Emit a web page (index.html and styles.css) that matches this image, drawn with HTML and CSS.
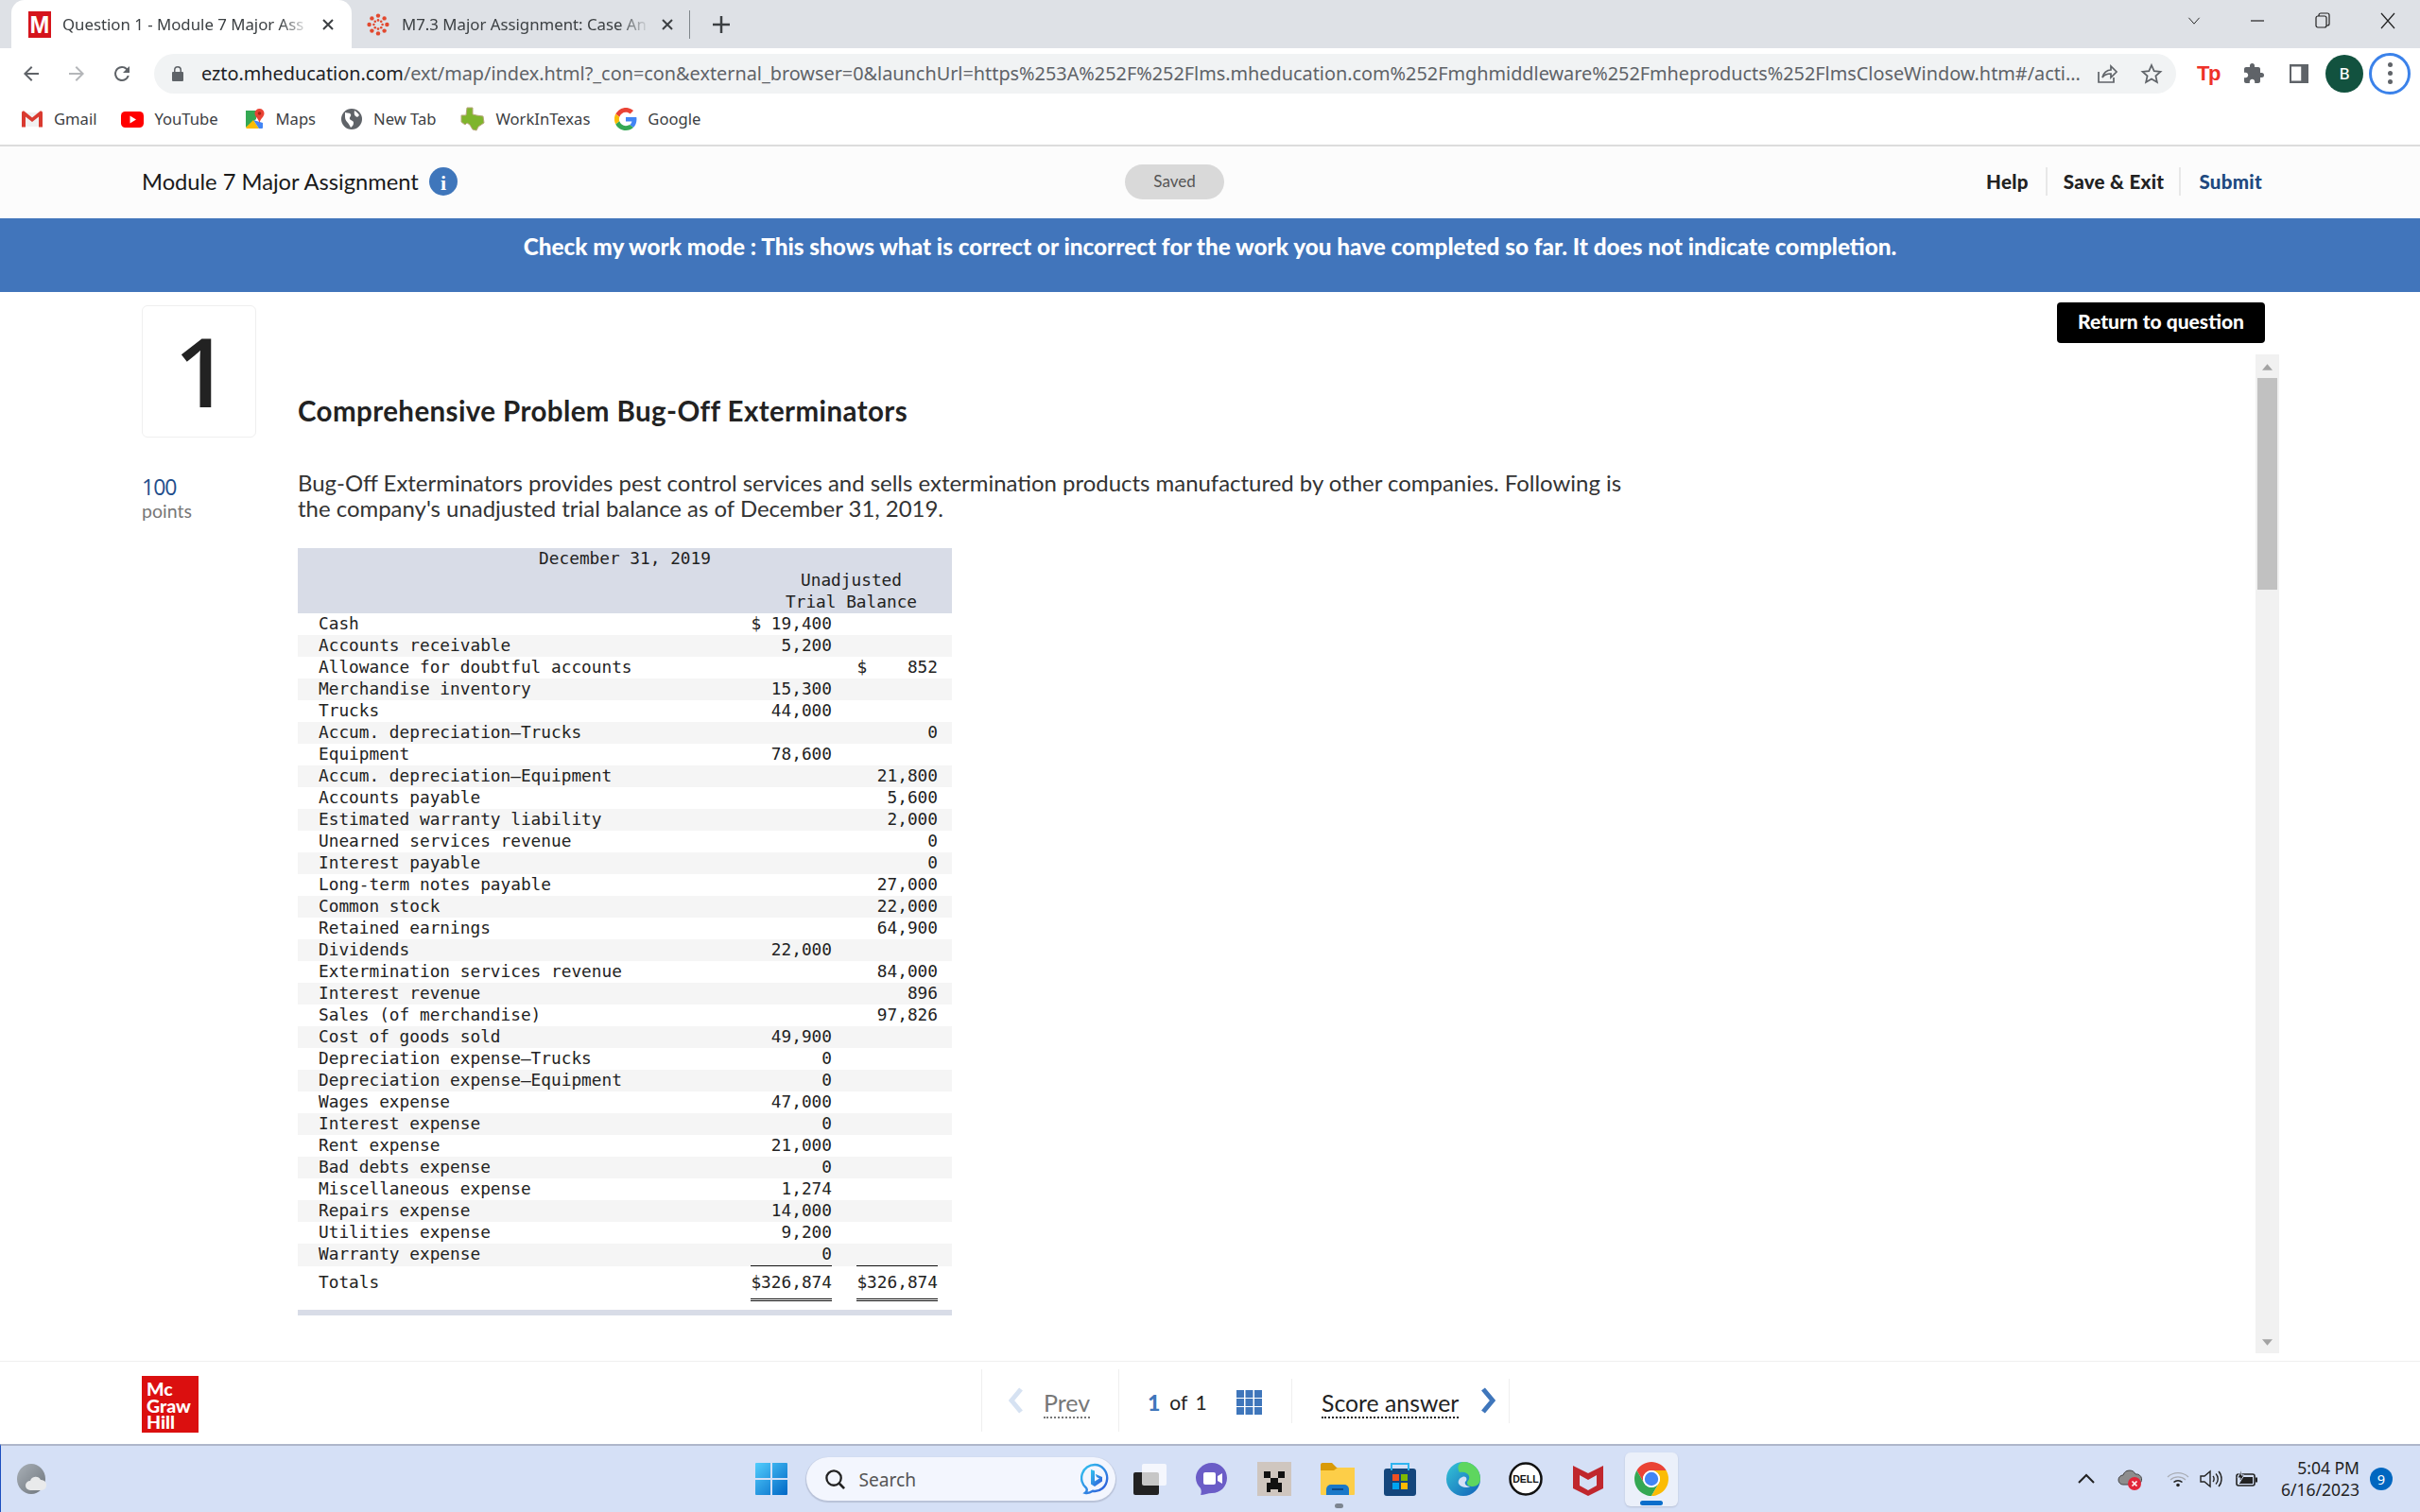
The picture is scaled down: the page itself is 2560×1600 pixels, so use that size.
FILE: index.html
```html
<!DOCTYPE html>
<html lang="en">
<head>
<meta charset="utf-8">
<title>Question 1 - Module 7 Major Assignment</title>
<link rel="stylesheet" href="styles.css">
</head>
<body>
<div class="tabstrip">
  <div class="tab tab-active">
    <span class="fav-m">M</span>
    <span class="tab-title">Question 1 - Module 7 Major Ass</span>
    <svg class="tab-x" viewBox="0 0 14 14"><path d="M2 2l10 10M12 2L2 12"/></svg>
  </div>
  <div class="tab tab-idle">
    <svg class="fav" viewBox="0 0 24 24"><g fill="#e2492f"><circle cx="12" cy="2.6" r="2.2"/><circle cx="12" cy="21.4" r="2.2"/><circle cx="2.6" cy="12" r="2.2"/><circle cx="21.4" cy="12" r="2.2"/><circle cx="5.4" cy="5.4" r="2.2"/><circle cx="18.6" cy="5.4" r="2.2"/><circle cx="5.4" cy="18.6" r="2.2"/><circle cx="18.6" cy="18.6" r="2.2"/><circle cx="12" cy="7.4" r="1.3"/><circle cx="12" cy="16.6" r="1.3"/><circle cx="7.4" cy="12" r="1.3"/><circle cx="16.6" cy="12" r="1.3"/><circle cx="8.8" cy="8.8" r="1.3"/><circle cx="15.2" cy="8.8" r="1.3"/><circle cx="8.8" cy="15.2" r="1.3"/><circle cx="15.2" cy="15.2" r="1.3"/></g></svg>
    <span class="tab-title">M7.3 Major Assignment: Case An</span>
    <svg class="tab-x" viewBox="0 0 14 14"><path d="M2 2l10 10M12 2L2 12"/></svg>
  </div>
  <span class="tab-sep"></span>
  <svg class="tab-plus" viewBox="0 0 20 20"><path d="M10 1v18M1 10h18"/></svg>
  <div class="win-controls">
    <svg class="win-btn win-chev" viewBox="0 0 20 20"><path d="M3 6l7 8 7-8"/></svg>
    <svg class="win-btn" viewBox="0 0 20 20"><path d="M3 10h14"/></svg>
    <svg class="win-btn" viewBox="0 0 20 20"><rect x="3" y="5" width="11" height="12" rx="2"/><path d="M6 5V4a2 2 0 0 1 2-2h7a2 2 0 0 1 2 2v9a2 2 0 0 1-2 2h-1"/></svg>
    <svg class="win-btn" viewBox="0 0 20 20"><path d="M3 2l14 16M17 2L3 18"/></svg>
  </div>
</div>

<div class="toolbar">
  <span class="tool"><svg class="ic" viewBox="0 0 24 24"><path d="M20 11H7.8l5.6-5.6L12 4l-8 8 8 8 1.4-1.4L7.8 13H20z"/></svg></span>
  <span class="tool"><svg class="ic ic-off" viewBox="0 0 24 24"><path d="M4 11h12.2l-5.6-5.6L12 4l8 8-8 8-1.4-1.4 5.6-5.6H4z"/></svg></span>
  <span class="tool"><svg class="ic" viewBox="0 0 24 24"><path d="M17.65 6.35A7.96 7.96 0 0 0 12 4a8 8 0 1 0 7.73 10h-2.08A6 6 0 1 1 12 6c1.66 0 3.14.69 4.22 1.78L13 11h7V4z"/></svg></span>
  <div class="omnibox">
    <svg class="lock" viewBox="0 0 14 18"><path d="M2 7h1V5a4 4 0 0 1 8 0v2h1a1 1 0 0 1 1 1v8a1 1 0 0 1-1 1H2a1 1 0 0 1-1-1V8a1 1 0 0 1 1-1zm2.5 0h5V5a2.5 2.5 0 0 0-5 0z"/></svg>
    <span class="url"><b>ezto.mheducation.com</b>/ext/map/index.html?_con=con&amp;external_browser=0&amp;launchUrl=https%253A%252F%252Flms.mheducation.com%252Fmghmiddleware%252Fmheproducts%252FlmsCloseWindow.htm#/acti...</span>
    <svg class="omni-ic" viewBox="0 0 24 24"><path d="M3 10v11h16v-5M7 16c1-5 5-8 9-8V4l6 6-6 6v-4c-4 0-7 1-9 4z"/></svg>
    <svg class="omni-ic" viewBox="0 0 24 24"><path d="M12 3l2.7 6.2 6.8.6-5.1 4.5 1.5 6.7L12 17.5 6.100 21l1.500-6.700L2.500 9.800l6.800-.6z"/></svg>
  </div>
  <div class="ext-row">
    <span class="tool"><span class="tp">Tp</span></span>
    <span class="tool"><svg class="ic" viewBox="0 0 24 24"><path d="M20.500 11H19V7c0-1.100-.9-2-2-2h-4V3.500a2.500 2.500 0 0 0-5 0V5H4c-1.100 0-2 .9-2 2v3.800h1.500c1.500 0 2.700 1.200 2.700 2.700S5 16.200 3.500 16.200H2V20c0 1.100.9 2 2 2h3.800v-1.500c0-1.500 1.200-2.700 2.700-2.700s2.700 1.200 2.700 2.700V22H17c1.100 0 2-.9 2-2v-4h1.500a2.500 2.500 0 0 0 0-5z"/></svg></span>
    <span class="tool"><svg class="ic" viewBox="0 0 24 24"><path fill-rule="evenodd" d="M2 2h20v20H2zM4 4.500v15h10.500v-15z"/><path d="M14.500 4h6v16h-6z"/></svg></span>
    <span class="tool"><span class="avatar">B</span></span>
    <span class="tool"><span class="menu-ring"><i></i><i></i><i></i></span></span>
  </div>
</div>

<div class="bookmarks">
  <span class="bm"><svg class="bm-ic" viewBox="0 0 24 24"><path fill="#f1f1f1" d="M3 5h18v15H3z"/><path fill="#d93a30" d="M1 5.500C1 3.500 3 3 4 4l8 6.500L20 4c1-1 3-.5 3 1.500V20.500h-4V9.500l-7 5.500-7-5.500v11H1z"/></svg>Gmail</span>
  <span class="bm"><svg class="bm-ic" viewBox="0 0 24 24"><rect y="4" width="24" height="17" rx="4.500" fill="#f00"/><path fill="#fff" d="M9.500 8.500l6.500 4-6.500 4z"/></svg>YouTube</span>
  <span class="bm"><svg class="bm-ic" viewBox="0 0 24 24"><path fill="#34a853" d="M3 3h11v9L3 21z"/><path fill="#fbbc04" d="M3 21l8-8 6 9H4z"/><path fill="#4285f4" d="M11 13l6 9h3a1 1 0 0 0 1-1v-5z"/><path fill="#ea4335" d="M17.500 1a5 5 0 0 1 5 5c0 3.500-3.700 5-5 10-1.300-5-5-6.500-5-10a5 5 0 0 1 5-5z"/><circle cx="17.500" cy="6" r="1.800" fill="#a52714"/></svg>Maps</span>
  <span class="bm"><svg class="bm-ic" viewBox="0 0 24 24"><circle cx="12" cy="12" r="11" fill="#5f6368"/><path fill="#fff" d="M5 5c3 1 5 0 6 2s-2 3-1 5 4 1 4 4-2 4-3 5c-1-2-2-4-3-5s-3-3-3-6zM15 3c2 1 4 3 5 5l-2 2c-2-1-4-2-3-7z"/></svg>New Tab</span>
  <span class="bm"><svg class="bm-tx" viewBox="0 0 26 26"><path fill="#7fb52c" stroke="#b7a77a" d="M7 1h6v7l4 1 7 1 1 7-6 4-2 4-4-1-3-5-3-2-2 2-4-3V9h5z"/></svg>WorkInTexas</span>
  <span class="bm"><svg class="bm-ic" viewBox="0 0 48 48"><path fill="#ea4335" d="M24 9.500c3.500 0 6.700 1.300 9.200 3.400l6.900-6.900A24 24 0 0 0 2.600 13.200l8 6.200C12.500 13.600 17.800 9.500 24 9.500z"/><path fill="#4285f4" d="M46.900 24.500c0-1.600-.2-3.100-.4-4.500H24v9h12.900c-.6 3-2.200 5.500-4.700 7.200l7.700 6C44.400 37.900 46.900 31.800 46.900 24.500z"/><path fill="#fbbc05" d="M10.500 28.600a14.500 14.500 0 0 1 0-9.200l-8-6.200a24 24 0 0 0 0 21.600z"/><path fill="#34a853" d="M24 48c6.500 0 11.900-2.100 15.900-5.800l-7.700-6c-2.200 1.500-5 2.300-8.200 2.300-6.200 0-11.500-4.200-13.400-9.800l-8 6.200C6.500 42.600 14.600 48 24 48z"/></svg>Google</span>
</div>

<header class="app-head">
  <div class="head-title">
    <span>Module 7 Major Assignment</span>
    <svg class="info" viewBox="0 0 30 30"><circle cx="15" cy="15" r="15" fill="#3f76bb"/><text x="15" y="24" text-anchor="middle" class="info-i">i</text></svg>
  </div>
  <span class="saved">Saved</span>
  <nav class="head-nav">
    <a class="nav-help">Help</a>
    <a class="nav-save">Save &amp; Exit</a>
    <a class="nav-submit">Submit</a>
  </nav>
</header>

<div class="banner">Check my work mode : This shows what is correct or incorrect for the work you have completed so far. It does not indicate completion.</div>

<main class="content">
  <section class="question">
    <div class="q-side">
      <div class="q-number">1</div>
      <div class="q-points"><span class="pts">100</span><span class="pts-label">points</span></div>
    </div>
    <div class="q-body">
      <h1 class="q-title">Comprehensive Problem Bug-Off Exterminators</h1>
      <p class="q-text">Bug-Off Exterminators provides pest control services and sells extermination products manufactured by other companies. Following is the company's unadjusted trial balance as of December 31, 2019.</p>
      <table class="tb">
        <colgroup><col class="c-name"><col class="c-num"><col class="c-gap"><col class="c-num"><col class="c-end"></colgroup>
        <thead>
          <tr><th colspan="5" class="th-date">December 31, 2019</th></tr>
          <tr><th></th><th colspan="4">Unadjusted</th></tr>
          <tr><th></th><th colspan="4">Trial Balance</th></tr>
        </thead>
        <tbody>
          <tr><td>Cash</td><td>$ 19,400</td><td></td><td></td><td></td></tr>
          <tr><td>Accounts receivable</td><td>5,200</td><td></td><td></td><td></td></tr>
          <tr><td>Allowance for doubtful accounts</td><td></td><td></td><td>$    852</td><td></td></tr>
          <tr><td>Merchandise inventory</td><td>15,300</td><td></td><td></td><td></td></tr>
          <tr><td>Trucks</td><td>44,000</td><td></td><td></td><td></td></tr>
          <tr><td>Accum. depreciation—Trucks</td><td></td><td></td><td>0</td><td></td></tr>
          <tr><td>Equipment</td><td>78,600</td><td></td><td></td><td></td></tr>
          <tr><td>Accum. depreciation—Equipment</td><td></td><td></td><td>21,800</td><td></td></tr>
          <tr><td>Accounts payable</td><td></td><td></td><td>5,600</td><td></td></tr>
          <tr><td>Estimated warranty liability</td><td></td><td></td><td>2,000</td><td></td></tr>
          <tr><td>Unearned services revenue</td><td></td><td></td><td>0</td><td></td></tr>
          <tr><td>Interest payable</td><td></td><td></td><td>0</td><td></td></tr>
          <tr><td>Long-term notes payable</td><td></td><td></td><td>27,000</td><td></td></tr>
          <tr><td>Common stock</td><td></td><td></td><td>22,000</td><td></td></tr>
          <tr><td>Retained earnings</td><td></td><td></td><td>64,900</td><td></td></tr>
          <tr><td>Dividends</td><td>22,000</td><td></td><td></td><td></td></tr>
          <tr><td>Extermination services revenue</td><td></td><td></td><td>84,000</td><td></td></tr>
          <tr><td>Interest revenue</td><td></td><td></td><td>896</td><td></td></tr>
          <tr><td>Sales (of merchandise)</td><td></td><td></td><td>97,826</td><td></td></tr>
          <tr><td>Cost of goods sold</td><td>49,900</td><td></td><td></td><td></td></tr>
          <tr><td>Depreciation expense—Trucks</td><td>0</td><td></td><td></td><td></td></tr>
          <tr><td>Depreciation expense—Equipment</td><td>0</td><td></td><td></td><td></td></tr>
          <tr><td>Wages expense</td><td>47,000</td><td></td><td></td><td></td></tr>
          <tr><td>Interest expense</td><td>0</td><td></td><td></td><td></td></tr>
          <tr><td>Rent expense</td><td>21,000</td><td></td><td></td><td></td></tr>
          <tr><td>Bad debts expense</td><td>0</td><td></td><td></td><td></td></tr>
          <tr><td>Miscellaneous expense</td><td>1,274</td><td></td><td></td><td></td></tr>
          <tr><td>Repairs expense</td><td>14,000</td><td></td><td></td><td></td></tr>
          <tr><td>Utilities expense</td><td>9,200</td><td></td><td></td><td></td></tr>
          <tr class="row-last"><td>Warranty expense</td><td>0</td><td></td><td></td><td></td></tr>
          <tr class="row-total"><td>Totals</td><td>$326,874</td><td></td><td>$326,874</td><td></td></tr>
        </tbody>
      </table>
      <div class="tb-foot"></div>
    </div>
  </section>
  <aside class="q-right">
    <a class="return-btn">Return to question</a>
    <div class="scrollbar">
      <svg class="sb-arrow" viewBox="0 0 10 6"><path d="M5 0l5 6H0z"/></svg>
      <div class="sb-thumb"></div>
      <svg class="sb-arrow sb-down" viewBox="0 0 10 6"><path d="M5 6L0 0h10z"/></svg>
    </div>
  </aside>
</main>

<footer class="app-foot">
  <div class="mh-logo">Mc<br>Graw<br>Hill</div>
  <div class="pager">
    <div class="pg-prev">
      <svg class="chev" viewBox="0 0 16 28"><path class="chev-off" d="M13 2L3 14l10 12"/></svg>
      <a class="prev-link">Prev</a>
    </div>
    <div class="pg-count">
      <b>1</b><span class="of">of</span><span>1</span>
      <svg class="grid-ic" viewBox="0 0 27 26"><g fill="#3f76bb"><rect width="8" height="8"/><rect x="9.500" width="8" height="8"/><rect x="19" width="8" height="8"/><rect y="9" width="8" height="8"/><rect x="9.500" y="9" width="8" height="8"/><rect x="19" y="9" width="8" height="8"/><rect y="18" width="8" height="8"/><rect x="9.500" y="18" width="8" height="8"/><rect x="19" y="18" width="8" height="8"/></g></svg>
    </div>
    <div class="pg-score">
      <a class="score-link">Score answer</a>
      <svg class="chev" viewBox="0 0 16 28"><path class="chev-on" d="M3 2l10 12L3 26"/></svg>
    </div>
  </div>
</footer>

<div class="taskbar">
  <svg class="weather" viewBox="0 0 32 32"><defs><linearGradient id="wg" x1="0" y1="0" x2="1" y2="1"><stop offset="0" stop-color="#a9b0b7"/><stop offset="1" stop-color="#6e757c"/></linearGradient></defs><ellipse cx="15" cy="16" rx="15" ry="16" fill="url(#wg)"/><path fill="#e9eaeb" d="M14 28a5 5 0 0 1 0-10 6 6 0 0 1 11-1 5.500 5.500 0 0 1 6 6 5 5 0 0 1-5 5z"/></svg>
  <div class="task-center">
    <span class="slot"><svg class="task-ic" viewBox="0 0 36 36"><defs><linearGradient id="st" x1="0" y1="0" x2="1" y2="1"><stop offset="0" stop-color="#52cdfd"/><stop offset="1" stop-color="#0067c5"/></linearGradient></defs><path fill="url(#st)" d="M1 2a1 1 0 0 1 1-1h15v16H1zM19 1h15a1 1 0 0 1 1 1v15H19zM1 19h16v16H2a1 1 0 0 1-1-1zM19 19h16v15a1 1 0 0 1-1 1H19z"/></svg></span>
    <div class="search">
      <svg class="search-ic" viewBox="0 0 24 24"><circle cx="10.500" cy="10.500" r="8" fill="none" stroke="#222" stroke-width="2.400"/><path d="M16.500 16.500l5.500 5.500" stroke="#222" stroke-width="2.800"/></svg>
      <span>Search</span>
      <svg class="bing" viewBox="0 0 30 34"><defs><linearGradient id="bg" x1="0" y1="0" x2="1" y2="1"><stop offset="0" stop-color="#32c5f0"/><stop offset="1" stop-color="#2e55d8"/></linearGradient></defs><path fill="none" stroke="url(#bg)" stroke-width="2.400" d="M15 2a13 14 0 1 1-2 27.800c-3 2-6 2.500-8 2 2-1.500 2-3.500 1.200-5A14 14 0 0 1 15 2z"/><path fill="url(#bg)" d="M11 7l4 1.500v11l5-3-3-1.500-1.300-3.300L23 15v4.500L15 25l-4-2.500z"/></svg>
    </div>
    <span class="slot"><svg class="task-ic" viewBox="0 0 36 36"><rect x="1" y="11" width="27" height="24" rx="2" fill="#222"/><rect x="10" y="2" width="26" height="23" rx="2" fill="#fff" opacity=".75"/></svg></span>
    <span class="slot"><svg class="task-ic" viewBox="0 0 36 36"><path fill="#6b5dc7" d="M18 1c9 0 16 7 16 16s-7 16-16 16c-4 0-8 2-12 2 1-2 1-5 0-7-3-3-5-7-5-11C1 8 9 1 18 1z"/><rect x="9" y="11" width="13" height="13" rx="2" fill="#fff"/><path fill="#fff" d="M24 15l5-3v11l-5-3z"/></svg></span>
    <span class="slot"><svg class="task-ic" viewBox="0 0 36 36"><rect width="36" height="36" fill="#cfc6bf"/><path fill="#111" d="M7 10h7v7H7zM22 10h7v7h-7zM14 17h8v5h4v10h-4v-3h-8v3h-4V22h4z"/></svg></span>
    <span class="slot"><svg class="task-ic" viewBox="0 0 36 36"><path fill="#d99a07" d="M0 3a2 2 0 0 1 2-2h10l5 5h19v6H0z"/><path fill="#fdce48" d="M0 9h14l4-3h18v28a1 1 0 0 1-1 1H1a1 1 0 0 1-1-1z"/><path fill="#1a78c8" d="M6 35v-6a5 5 0 0 1 5-5h14a5 5 0 0 1 5 5v6z"/><rect x="12" y="28" width="12" height="2" fill="#0c4a8a"/></svg><i class="run-dot"></i></span>
    <span class="slot"><svg class="task-ic" viewBox="0 0 36 36"><rect x="1" y="7" width="34" height="29" rx="3" fill="#14467c"/><path d="M9 9V2h18v7" fill="none" stroke="#2fb4ef" stroke-width="2"/><rect x="10" y="13" width="7" height="7" fill="#f25022"/><rect x="19" y="13" width="7" height="7" fill="#7fba00"/><rect x="10" y="22" width="7" height="7" fill="#00a4ef"/><rect x="19" y="22" width="7" height="7" fill="#ffb900"/></svg></span>
    <span class="slot"><svg class="task-ic" viewBox="0 0 36 36"><defs><linearGradient id="ed" x1="0" y1="0" x2="1" y2="1"><stop offset="0" stop-color="#36c6d8"/><stop offset="1" stop-color="#1160b8"/></linearGradient></defs><circle cx="18" cy="18" r="18" fill="url(#ed)"/><path fill="#5ed65f" d="M18 0a18 18 0 0 1 18 18c0 5-4 8-8 8-3 0-6-1-6-4 0-2 3-3 2-7-1-3-5-5-10-4C10 5 14 0 18 0z"/><path fill="#d5e0f6" d="M17 16c4-2 6 3 3 5-1 2 1 5 5 5-3 2-10 1-12-3-1-3 1-6 4-7z"/></svg></span>
    <span class="slot"><svg class="task-ic" viewBox="0 0 36 36"><circle cx="18" cy="18" r="16.500" fill="#fff" stroke="#111" stroke-width="2.500"/><text x="18" y="22" text-anchor="middle" class="dell-t">DELL</text></svg></span>
    <span class="slot"><svg class="task-ic" viewBox="0 0 36 36"><path fill="#c0272d" d="M2 4l16 8 16-8v24l-16 8-16-8zM9 14v11l9 5 9-5V14l-9 5z"/></svg></span>
    <span class="slot slot-active"><svg class="task-ic" viewBox="4 4 40 40"><path fill="#ea4335" d="M41.300 14A20 20 0 0 0 6.700 14L15.340 29A10 10 0 0 1 24 14z"/><path fill="#34a853" d="M6.700 14A20 20 0 0 0 24 44L32.660 29A10 10 0 0 1 15.340 29z"/><path fill="#fbbc04" d="M24 44A20 20 0 0 0 41.300 14L24 14A10 10 0 0 1 32.660 29z"/><circle cx="24" cy="24" r="10" fill="#fff"/><circle cx="24" cy="24" r="8" fill="#4285f4"/></svg><i class="run-bar"></i></span>
  </div>
  <div class="tray">
    <svg class="tray-chev" viewBox="0 0 18 12"><path d="M1 10l8-8 8 8"/></svg>
    <svg class="tray-cloud" viewBox="0 0 26 24"><path fill="#8d8d8d" stroke="#444" d="M6 18a5 5 0 0 1 0-10 7 7 0 0 1 13-1 5 5 0 0 1 2 11z"/><circle cx="18" cy="17" r="7" fill="#e2263a"/><path d="M15.500 14.500l5 5M20.500 14.500l-5 5" stroke="#fff" stroke-width="1.600"/></svg>
    <svg class="tray-wifi" viewBox="0 0 24 18"><path d="M1 7a16 16 0 0 1 22 0" stroke="#a9adb5"/><path d="M4 10a12 12 0 0 1 16 0" stroke="#a9adb5"/><path d="M7.500 12.500a7 7 0 0 1 9 0" stroke="#222" stroke-width="1.600"/><circle cx="12" cy="15.500" r="1.800" fill="#222" stroke="none"/></svg>
    <svg class="tray-vol" viewBox="0 0 24 20"><path d="M1 7v6h4l6 5V2L5 7z"/><path d="M14 7c1.500 1.500 1.500 4.500 0 6M17 4.500c3 3 3 8 0 11M20 2c4 4.500 4 11.500 0 16"/></svg>
    <svg class="tray-bat" viewBox="0 0 24 20"><rect x="1" y="5" width="19" height="12" rx="2" fill="none" stroke="#222" stroke-width="1.600"/><rect x="4" y="8" width="14" height="7" fill="#222"/><rect x="21" y="8.500" width="2" height="5" fill="#222"/><path fill="#222" stroke="#d5e0f6" stroke-width="1" d="M6 0L2 9h3l-1 5 5-8H6z"/></svg>
    <div class="clock"><span>5:04 PM</span><span>6/16/2023</span></div>
    <span class="notif">9</span>
  </div>
</div>
</body>
</html>
```
FILE: styles.css
```css
* { box-sizing: border-box; }
html, body { margin: 0; padding: 0; }
body {
  width: 2560px; height: 1600px; overflow: hidden;
  display: flex; flex-direction: column;
  font-family: "Lato", "Liberation Sans", sans-serif;
  color: #222; background: #fff;
}
a { cursor: pointer; }

/* Browser tabs */
.tabstrip { height: 51px; background: #dee1e6; display: flex; align-items: center; padding-left: 12px; flex: none; }
.tab { height: 51px; display: flex; align-items: center; font: 16.800px "Noto Sans", sans-serif; color: #3c4043; }
.tab-active { width: 360px; background: #fff; border-radius: 14px 14px 0 0; padding-left: 18px; }
.tab-idle { width: 347px; padding-left: 16px; }
.fav-m { width: 24px; height: 28px; background: #d5141c; color: #fff; font: 700 25px/28px "Liberation Sans", sans-serif; text-align: center; flex: none; }
.fav { width: 24px; height: 24px; flex: none; }
.tab-title {
  width: 262px; margin-left: 12px; white-space: nowrap;
  -webkit-mask-image: linear-gradient(90deg, #000 88%, transparent 100%);
  mask-image: linear-gradient(90deg, #000 88%, transparent 100%);
}
.tab-idle .tab-title { margin-left: 13px; }
.tab-x { width: 14px; height: 14px; margin-left: 12px; flex: none; fill: none; stroke: #3c4043; stroke-width: 2; }
.tab-sep { width: 1px; height: 30px; background: #80868b; margin-left: 10px; }
.tab-plus { width: 20px; height: 20px; margin-left: 23px; fill: none; stroke: #3c4043; stroke-width: 2.500; }
.win-controls { margin-left: auto; display: flex; align-items: center; padding: 0 24px 8px 0; gap: 49px; }
.win-btn { width: 20px; height: 20px; fill: none; stroke: #222; stroke-width: 1.200; }
.win-chev { width: 16px; }

/* Browser toolbar */
.toolbar { height: 51px; display: flex; align-items: center; padding: 2px 0 0 9px; flex: none; background: #fff; }
.tool { width: 48px; height: 44px; display: flex; align-items: center; justify-content: center; flex: none; }
.ic { width: 24px; height: 24px; fill: #5f6368; }
.ic-off { fill: #b4b6b9; }
.omnibox { width: 2139px; height: 42px; margin-left: 10px; border-radius: 21px; background: #f1f3f4; display: flex; align-items: center; padding: 0 15px 0 18px; flex: none; }
.lock { width: 14px; height: 18px; fill: #5f6368; flex: none; }
.url { margin-left: 18px; width: 1984px; flex: none; font: 19.850px/42px "Noto Sans", sans-serif; color: #5f6368; white-space: nowrap; }
.url b { font-weight: 400; color: #202124; }
.omni-ic { width: 24px; height: 24px; fill: none; stroke: #5f6368; stroke-width: 1.700; margin-left: 23px; flex: none; }
.url + .omni-ic { margin-left: 20px; }
.ext-row { display: flex; margin-left: 10px; }
.tp { font: 900 22px/1 "Liberation Sans", sans-serif; color: #ee3229; letter-spacing: -1.500px; }
.avatar { width: 40px; height: 40px; border-radius: 50%; background: #12523f; color: #fff; font: 500 17px/40px "Noto Sans", sans-serif; text-align: center; }
.menu-ring { width: 44px; height: 44px; border: 3px solid #3b82ea; border-radius: 50%; display: flex; flex-direction: column; align-items: center; justify-content: center; gap: 4px; }
.menu-ring i { width: 5px; height: 5px; background: #5f6368; border-radius: 50%; }

/* Bookmarks */
.bookmarks { height: 53px; padding: 0 0 4px 22px; display: flex; align-items: center; gap: 26px; border-bottom: 2px solid #dcdcdc; flex: none; font: 16.600px "Noto Sans", sans-serif; color: #3c4043; }
.bm { display: flex; align-items: center; gap: 11px; }
.bm-ic { width: 24px; height: 24px; flex: none; }
.bm-tx { width: 26px; height: 26px; flex: none; }

/* Assignment header */
.app-head { height: 76px; background: #fcfcfc; display: flex; align-items: center; padding: 0 167px 2px 150px; flex: none; }
.head-title { width: 1040px; display: flex; align-items: center; gap: 11px; font-size: 23.700px; color: #1a1a1a; }
.info { width: 30px; height: 30px; }
.info-i { font: 700 22px "Liberation Serif", serif; fill: #fff; }
.saved { width: 105px; height: 37px; background: #d9d9d9; border-radius: 19px; text-align: center; font-size: 17px; line-height: 35px; color: #555; }
.head-nav { margin-left: auto; display: flex; align-items: center; font-size: 20.500px; font-weight: 900; letter-spacing: .3px; }
.head-nav a { height: 30px; line-height: 30px; }
.nav-help { padding-right: 18px; border-right: 2px solid #e8e8e8; }
.nav-save { padding: 0 16px 0 17px; border-right: 2px solid #e8e8e8; }
.nav-submit { padding-left: 19px; color: #20497f; }

.banner { height: 78px; background: #4175bb; color: #fff; padding-top: 15px; text-align: center; font-size: 24.300px; font-weight: 900; line-height: 30px; flex: none; }

/* Question */
.content { flex: 1; min-height: 0; display: flex; padding-left: 150px; }
.question { width: 2026px; display: flex; flex: none; overflow: hidden; }
.q-side { width: 165px; flex: none; padding-top: 14px; }
.q-number { width: 121px; height: 140px; border: 1px solid #efefef; border-radius: 6px; padding-left: 6px; font: 600 102px/136px "Open Sans", sans-serif; text-align: center; color: #222; }
.q-points { margin-top: 38px; display: flex; flex-direction: column; }
.pts { font: 23px/28px "Open Sans", sans-serif; color: #1f4e8c; letter-spacing: -1px; }
.pts-label { font-size: 19.500px; line-height: 24px; color: #777; }
.q-body { flex: 1; padding-top: 108px; }
.q-title { margin: 0; font-size: 29.500px; font-weight: 700; letter-spacing: .4px; line-height: 36px; color: #222; }
.q-text { margin: 44px 0 0; width: 1430px; font-size: 23.950px; line-height: 27px; color: #333; }
.tb { margin-top: 29px; width: 692px; border-collapse: collapse; table-layout: fixed; font: 17.770px/23px "DejaVu Sans Mono", "Liberation Mono", monospace; color: #222; }
.c-name { width: 479px; } .c-num { width: 86px; } .c-gap { width: 26px; } .c-end { width: 15px; }
.tb th { height: 23px; padding: 0; background: #d8dce7; font-weight: 400; text-align: center; white-space: pre; }
.tb td { height: 23px; padding: 0; text-align: right; white-space: pre; }
.tb td:first-child { text-align: left; padding-left: 22px; }
.tb tbody tr:nth-child(even) { background: #f5f5f5; }
.row-last td:nth-child(2), .row-last td:nth-child(4) { border-bottom: 1.500px solid #111; }
.row-total td { height: 36px; vertical-align: middle; }
.row-total td:nth-child(2), .row-total td:nth-child(4) { border-bottom: 3.500px double #111; }
.tb-foot { width: 692px; height: 6px; margin-top: 9px; background: #d8dce7; }

.q-right { width: 235px; flex: none; display: flex; flex-direction: column; align-items: flex-end; }
.return-btn { width: 220px; height: 43px; margin: 11px 15px 12px 0; background: #000; color: #fff; border-radius: 4px; text-align: center; font-size: 21px; font-weight: 900; line-height: 40px; flex: none; }
.scrollbar { width: 25px; flex: 1; margin-bottom: 8px; background: #f1f1f1; display: flex; flex-direction: column; align-items: center; padding-top: 10px; }
.sb-arrow { width: 11px; height: 7px; fill: #a3a3a3; flex: none; }
.sb-thumb { width: 21px; height: 224px; margin-top: 8px; background: #c1c1c1; flex: none; }
.sb-down { margin-top: auto; margin-bottom: 8px; }

/* Footer */
.app-foot { height: 88px; border-top: 1px solid #efefef; display: flex; padding-left: 150px; flex: none; background: #fff; }
.mh-logo { width: 60px; height: 60px; margin-top: 15px; background: #db0f0f; color: #fff; font-size: 19.500px; font-weight: 900; line-height: 17.500px; padding: 5px 0 0 5px; flex: none; }
.pager { margin-left: 828px; display: flex; align-items: center; height: 66px; margin-top: 8px; }
.pg-prev { width: 146px; height: 66px; border: solid #efefef; border-width: 0 1px; display: flex; align-items: center; padding-left: 28px; gap: 21px; }
.chev { width: 16px; height: 28px; flex: none; fill: none; stroke-width: 5; }
.chev-off { stroke: #d6e2f2; }
.chev-on { stroke: #3f76bb; }
.prev-link { padding-top: 7px; font-size: 25px; line-height: 29px; color: #777; border-bottom: 2px dotted #777; }
.pg-count { width: 183px; height: 47px; border-right: 1px solid #efefef; display: flex; align-items: center; padding: 3px 0 0 30px; font-size: 21px; color: #222; }
.pg-count b { color: #3f76bb; font-size: 23px; font-weight: 900; }
.of { margin: 0 8px 0 10px; }
.grid-ic { width: 27px; height: 26px; margin-left: 31px; }
.pg-score { width: 230px; height: 47px; border-right: 1px solid #efefef; display: flex; align-items: center; padding-left: 31px; gap: 23px; }
.score-link { padding-top: 7px; font-size: 24.800px; line-height: 29px; color: #222; border-bottom: 2px dotted #222; }

/* Windows taskbar */
.taskbar { height: 72px; border-top: 2px solid #aeb6ca; border-left: 1px solid #1c4fc0; background: #d5e0f6; display: flex; align-items: center; flex: none; padding-left: 17px; }
.weather { width: 32px; height: 32px; flex: none; }
.task-center { display: flex; align-items: center; margin-left: 733px; }
.slot { width: 66.400px; height: 57px; display: flex; align-items: center; justify-content: center; position: relative; flex: none; }
.slot-active { width: 56px; margin-left: 5px; background: #ebf0fa; border-radius: 6px; box-shadow: 0 1px 2px #b7c0d6; }
.task-ic { width: 36px; height: 36px; }
.run-dot { position: absolute; left: 30px; bottom: -2px; width: 9px; height: 5px; border-radius: 3px; background: #7d8590; }
.run-bar { position: absolute; left: 16px; bottom: 1px; width: 24px; height: 5px; border-radius: 3px; background: #0a6ecb; }
.search { width: 327px; height: 46px; margin: 0 2px 0 4px; background: #f3f6fe; border-radius: 23px; box-shadow: 0 1px 1px 1px #b9c2d8; display: flex; align-items: center; padding-left: 16px; font: 19.200px "Noto Sans", sans-serif; color: #555; flex: none; }
.search-ic { width: 23px; height: 23px; flex: none; margin-left: 3px; }
.search span { margin-left: 13px; }
.bing { width: 30px; height: 34px; margin-left: auto; margin-right: 7px; }
.tray { margin-left: auto; display: flex; align-items: center; padding-right: 29px; }
.tray-chev { width: 18px; height: 12px; fill: none; stroke: #222; stroke-width: 2; }
.tray-cloud { width: 26px; height: 24px; margin-left: 24px; }
.tray-wifi { width: 24px; height: 18px; margin-left: 26px; fill: none; stroke-width: 1.200; }
.tray-vol { width: 24px; height: 20px; margin-left: 11px; fill: none; stroke: #222; stroke-width: 1.400; }
.tray-bat { width: 24px; height: 20px; margin-left: 14px; }
.clock { margin-left: 11px; display: flex; flex-direction: column; align-items: flex-end; font: 17.500px/23px "Noto Sans", sans-serif; color: #222; width: 96px; }
.notif { width: 24px; height: 24px; margin-left: 11px; background: #0067c0; border-radius: 50%; color: #fff; font: 14.500px/24px "Noto Sans", sans-serif; text-align: center; }
.dell-t { font: 700 10.500px "Liberation Sans", sans-serif; fill: #111; }
```
